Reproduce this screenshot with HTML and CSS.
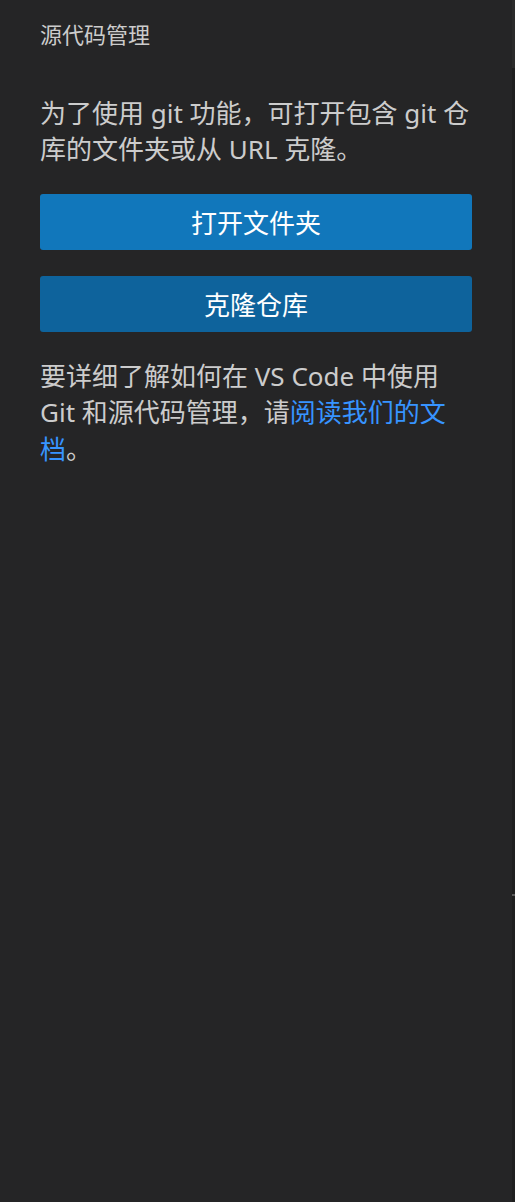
FILE: index.html
```html
<!DOCTYPE html>
<html lang="zh-CN">
<head>
<meta charset="utf-8">
<title>源代码管理</title>
<link rel="stylesheet" href="styles.css">
</head>
<body>
<div class="layout">
  <main class="panel">
    <header class="panel-title">源代码管理</header>
    <p class="text">为了使用 git 功能，可打开包含 git 仓库的文件夹或从 URL 克隆。</p>
    <button class="btn btn-primary">打开文件夹</button>
    <button class="btn btn-secondary">克隆仓库</button>
    <p class="text">要详细了解如何在 VS Code 中使用 Git 和源代码管理，请<a class="link" href="#">阅读我们的文档</a>。</p>
  </main>
  <aside class="scrollbar">
    <div class="scrollbar-slider"></div>
    <div class="scrollbar-mark"></div>
  </aside>
</div>
</body>
</html>
```

FILE: styles.css
```css
html, body {
  margin: 0;
  padding: 0;
  background: #252526;
}
body {
  font-family: "Segoe UI", "Noto Sans", "Noto Sans CJK SC", sans-serif;
  color: #cccccc;
}
.layout {
  display: flex;
  height: 1202px;
  width: 515px;
}
.panel {
  flex: 1;
  padding: 0 40px;
  display: flex;
  flex-direction: column;
}
.panel-title {
  height: 69px;
  line-height: 69px;
  font-size: 22px;
  color: #cccccc;
}
.text {
  margin: 26px 0 0 0;
  font-size: 26px;
  line-height: 36.4px;
}
.btn {
  display: block;
  width: 100%;
  height: 56px;
  margin: 26px 0 0 0;
  border: none;
  border-radius: 3px;
  color: #ffffff;
  font-family: inherit;
  font-size: 26px;
  padding: 0;
}
.btn-primary {
  background: #1177bb;
}
.btn-secondary {
  background: #0e639c;
}
.link {
  color: #3794ff;
  text-decoration: none;
}
.scrollbar {
  width: 3px;
  background: #1f1f1f;
  display: flex;
  flex-direction: column;
}
.scrollbar-slider {
  height: 68px;
  background: #2b2b2b;
}
.scrollbar-mark {
  margin-top: 826px;
  height: 2px;
  background: #5a5a5a;
}
```
